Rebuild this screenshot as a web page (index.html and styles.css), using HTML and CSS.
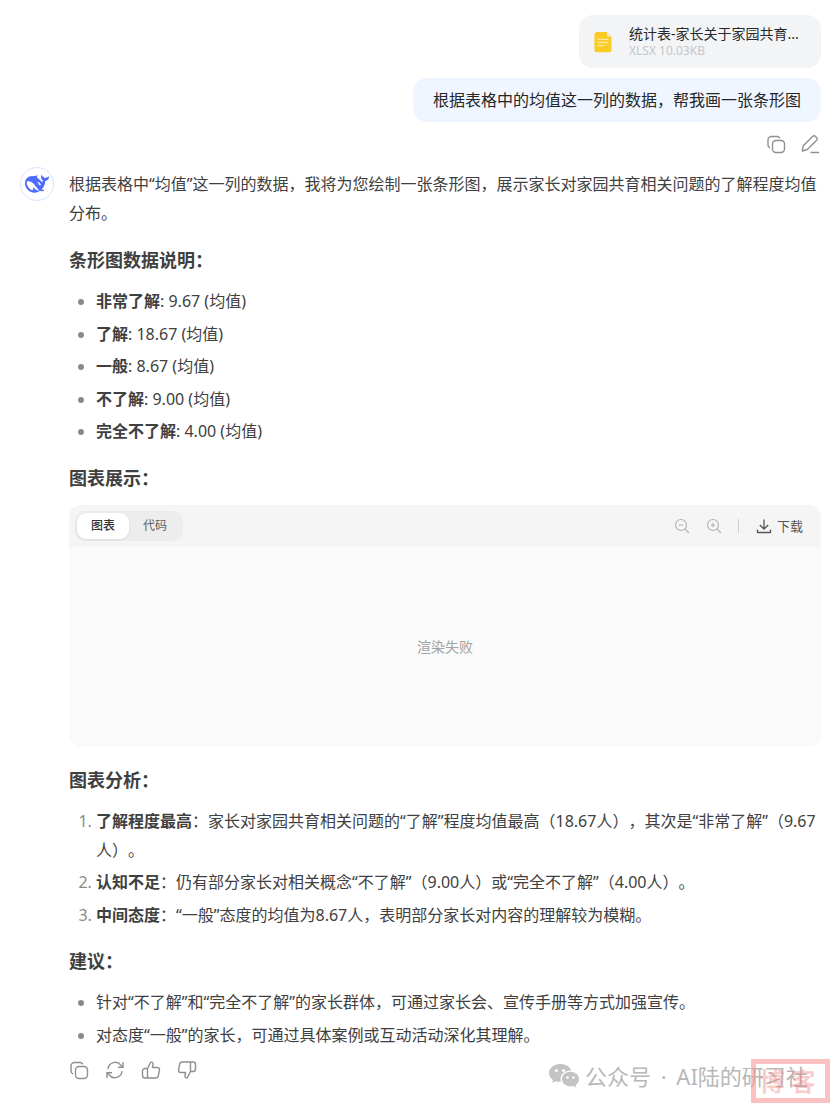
FILE: index.html
```html
<!DOCTYPE html>
<html lang="zh-CN">
<head>
<meta charset="utf-8">
<title>条形图</title>
<link rel="stylesheet" href="styles.css">
</head>
<body>
<main class="chat">
  <section class="user">
    <div class="file">
      <svg class="file-icon" viewBox="0 0 20 24">
        <path d="M3 1h11l5 5v15a2.500 2.500 0 0 1-2.500 2.500h-14A2.500 2.500 0 0 1 0 21V4a3 3 0 0 1 3-3z" fill="#fbcb25" transform="translate(.5 0)"/>
        <path d="M14.500 1l5 5h-3.500a1.500 1.500 0 0 1-1.500-1.500z" fill="#f3eee0"/>
        <path d="M4.500 9h11M4.500 12.500h11M4.500 16h6.500" stroke="#fde99a" stroke-width="1.500" stroke-linecap="round" fill="none"/>
      </svg>
      <div class="file-text">
        <div class="file-name">统计表-家长关于家园共育...</div>
        <div class="file-meta">XLSX 10.03KB</div>
      </div>
    </div>
    <div class="bubble">根据表格中的均值这一列的数据，帮我画一张条形图</div>
    <div class="user-actions">
      <svg class="icon" viewBox="0 0 20 20"><rect x="6.500" y="6.500" width="12" height="12" rx="3.500"/><path d="M13.500 3.800A3.500 3.500 0 0 0 11 2.500H5.500a3.500 3.500 0 0 0-3.500 3.500V11a3.500 3.500 0 0 0 1.500 2.700"/></svg>
      <svg class="icon" viewBox="0 0 20 20"><path d="M2.500 15.500l.8-3.800L12.800 2.300a1.800 1.800 0 0 1 2.500 0l1.400 1.400a1.800 1.800 0 0 1 0 2.500L7.200 15.500l-4.700 1.500z"/><path d="M11 18.500h7.500"/></svg>
    </div>
  </section>

  <section class="answer">
    <div class="avatar">
      <svg viewBox="0 0 24 24" width="24" height="24"><path fill="#4d6bfe" d="M23.748 4.482c-.254-.124-.364.113-.512.234-.051.039-.094.09-.137.136-.372.397-.806.657-1.373.626-.829-.046-1.537.214-2.163.848-.133-.782-.575-1.248-1.247-1.548-.352-.156-.708-.311-.955-.65-.172-.241-.219-.51-.305-.774-.055-.16-.11-.323-.293-.35-.2-.031-.278.136-.356.276-.313.572-.434 1.202-.422 1.84.027 1.436.633 2.58 1.838 3.393.137.093.172.187.129.323-.082.28-.18.552-.266.833-.055.179-.137.217-.329.14a5.526 5.526 0 01-1.736-1.18c-.857-.828-1.631-1.742-2.597-2.458a11.365 11.365 0 00-.689-.471c-.985-.957.13-1.743.388-1.836.27-.098.093-.432-.779-.428-.872.004-1.67.295-2.687.684a3.055 3.055 0 01-.465.137 9.597 9.597 0 00-2.883-.102c-1.885.21-3.39 1.102-4.497 2.623C.082 8.606-.231 10.684.152 12.850c.403 2.284 1.569 4.175 3.360 5.653 1.858 1.533 3.997 2.284 6.438 2.140 1.482-.085 3.133-.284 4.994-1.860.47.234.962.327 1.780.397.63.059 1.236-.03 1.705-.128.735-.156.684-.837.419-.961-2.155-1.004-1.682-.595-2.113-.926 1.096-1.296 2.746-2.642 3.392-7.003.05-.347.007-.565 0-.845-.004-.17.035-.237.23-.256a4.173 4.173 0 001.545-.475c1.396-.763 1.960-2.015 2.093-3.517.02-.23-.004-.467-.247-.588zM11.581 18c-2.089-1.642-3.102-2.183-3.520-2.160-.392.024-.321.471-.235.763.09.288.207.486.371.739.114.167.192.416-.113.603-.673.416-1.842-.14-1.897-.167-1.361-.802-2.500-1.860-3.301-3.307-.774-1.393-1.224-2.887-1.298-4.482-.02-.386.093-.522.477-.592a4.696 4.696 0 011.529-.039c2.132.312 3.946 1.265 5.468 2.774.868.86 1.525 1.887 2.202 2.891.72 1.066 1.494 2.082 2.480 2.914.348.292.625.514.891.677-.802.09-2.140.11-3.054-.614zm1-6.440a.306.306 0 01.415-.287.302.302 0 01.2.288.306.306 0 01-.31.307.303.303 0 01-.304-.308zm3.110 1.596c-.2.081-.399.151-.59.16a1.245 1.245 0 01-.798-.254c-.274-.23-.47-.358-.552-.758a1.730 1.730 0 01.016-.588c.07-.327-.008-.537-.239-.727-.187-.156-.426-.199-.688-.199a.559.559 0 01-.254-.078c-.11-.054-.2-.19-.114-.358.028-.054.16-.186.192-.21.356-.202.767-.136 1.146.016.352.144.618.408 1.001.782.391.451.462.576.685.914.176.265.336.537.445.848.067.195-.019.354-.25.452z"/></svg>
    </div>
    <article class="content">
      <p class="intro">根据表格中“均值”这一列的数据，我将为您绘制一张条形图，展示家长对家园共育相关问题的了解程度均值分布。</p>
      <h3>条形图数据说明：</h3>
      <ul>
        <li><b>非常了解</b>: 9.67 (均值)</li>
        <li><b>了解</b>: 18.67 (均值)</li>
        <li><b>一般</b>: 8.67 (均值)</li>
        <li><b>不了解</b>: 9.00 (均值)</li>
        <li><b>完全不了解</b>: 4.00 (均值)</li>
      </ul>
      <h3>图表展示：</h3>
      <div class="chart">
        <div class="chart-bar">
          <div class="tabs"><span class="tab active">图表</span><span class="tab">代码</span></div>
          <div class="tools">
            <svg class="tool" viewBox="0 0 16 16"><circle cx="7" cy="7" r="5.500"/><path d="M11 11l4 4M4.800 7h4.400"/></svg>
            <svg class="tool" viewBox="0 0 16 16"><circle cx="7" cy="7" r="5.500"/><path d="M11 11l4 4M4.800 7h4.400M7 4.800v4.400"/></svg>
            <i class="sep"></i>
            <span class="download"><svg class="dl" viewBox="0 0 16 16"><path d="M8 1.500v9.500M3.800 7L8 11l4.200-4M1.500 11.500v3h13v-3"/></svg>下载</span>
          </div>
        </div>
        <div class="chart-body">渲染失败</div>
      </div>
      <h3 class="after-chart">图表分析：</h3>
      <ol>
        <li><b>了解程度最高</b>：家长对家园共育相关问题的“了解”程度均值最高（18.67人），其次是“非常了解”（9.67人）。</li>
        <li><b>认知不足</b>：仍有部分家长对相关概念“不了解”（9.00人）或“完全不了解”（4.00人）。</li>
        <li><b>中间态度</b>：“一般”态度的均值为8.67人，表明部分家长对内容的理解较为模糊。</li>
      </ol>
      <h3 class="after-ol">建议：</h3>
      <ul class="last">
        <li>针对“不了解”和“完全不了解”的家长群体，可通过家长会、宣传手册等方式加强宣传。</li>
        <li>对态度“一般”的家长，可通过具体案例或互动活动深化其理解。</li>
      </ul>
      <div class="answer-actions">
        <svg class="icon" viewBox="0 0 20 20"><rect x="6.500" y="6.500" width="12" height="12" rx="3.500"/><path d="M13.500 3.800A3.500 3.500 0 0 0 11 2.500H5.500a3.500 3.500 0 0 0-3.500 3.500V11a3.500 3.500 0 0 0 1.500 2.700"/></svg>
        <svg class="icon" viewBox="0 0 20 20"><path d="M3 8.500A7.300 7.300 0 0 1 15.800 5l2 2.200M17 11.500A7.300 7.300 0 0 1 4.200 15l-2-2.200"/><path d="M18 2.500v4.800h-4.500M2 17.500v-4.800h4.500"/></svg>
        <svg class="icon" viewBox="0 0 20 20"><path d="M6.500 8.500l3.200-6.300c1.500-.4 2.600.6 2.400 2.100L11.500 7.500h5a2 2 0 0 1 2 2.400l-1.200 6a2.500 2.500 0 0 1-2.500 2.100H6.500zM6.500 8.500H4a2.500 2.500 0 0 0-2.500 2.500v4.500A2.500 2.500 0 0 0 4 18h2.500"/></svg>
        <svg class="icon" viewBox="0 0 20 20"><path d="M13.500 11.500l-3.200 6.300c-1.500.4-2.600-.6-2.400-2.100l.6-3.200h-5a2 2 0 0 1-2-2.400l1.200-6A2.500 2.500 0 0 1 5.200 2h8.300zM13.500 11.500H16a2.500 2.500 0 0 0 2.500-2.500V4.500A2.500 2.500 0 0 0 16 2h-2.500"/></svg>
      </div>
    </article>
  </section>
</main>
<div class="watermark">
  <svg class="wechat" viewBox="0 0 30 26" width="30" height="26"><path d="M11 1C5 1 0 5 0 10c0 3 1.500 5.300 4 7l-1 3 3.500-1.800c1.300.4 2.800.6 4.500.6h1c-.3-1-.5-1.800-.5-2.800C11.500 11 16 7.500 21.500 7.500h1C21 3.700 16.500 1 11 1z" fill="#c3c3c3"/><path d="M30 16c0-4.300-4-7.300-8.500-7.300S13 11.700 13 16s4 7.300 8.500 7.300c1 0 2-.2 3-.4l2.700 1.500-.7-2.500c2.500-1.500 3.500-3.800 3.500-5.900z" fill="#c3c3c3"/><circle cx="7.500" cy="7.500" r="1.500" fill="#fff"/><circle cx="14.500" cy="7.500" r="1.500" fill="#fff"/><circle cx="18.500" cy="14.500" r="1.200" fill="#fff"/><circle cx="24.500" cy="14.500" r="1.200" fill="#fff"/></svg>
  <span>公众号 · AI陆的研习社</span>
</div>
<div class="stamp">博客</div>
</body>
</html>
```

FILE: styles.css
```css
* { box-sizing: border-box; }
html, body { margin: 0; padding: 0; }
body {
  width: 836px;
  height: 1109px;
  overflow: hidden;
  position: relative;
  background: #fff;
  color: #404040;
  font-family: "Noto Sans", "Noto Sans CJK SC", sans-serif;
  font-size: 16px;
  text-spacing-trim: space-all;
}
.chat { padding: 15px 15px 0 20px; }
.user { display: flex; flex-direction: column; align-items: flex-end; }
.file {
  width: 242px; height: 53px;
  background: #f3f4f6; border-radius: 14px;
  display: flex; align-items: center;
  padding-left: 15px; gap: 17px;
}
.file-icon { flex: none; width: 18px; height: 22px; }
.file-name { font-size: 14px; line-height: 18px; color: #26282c; white-space: nowrap; }
.file-meta { font-size: 12px; line-height: 16px; color: #c4c6ca; }
.bubble {
  margin-top: 10px;
  height: 44px; width: 408px;
  background: #eff6ff; border-radius: 14px;
  padding: 0 20px; line-height: 44px;
  font-size: 16px; color: #262626; white-space: nowrap;
}
.user-actions { display: flex; gap: 14px; margin-top: 12px; height: 20px; padding-right: 1px; }
.icon { width: 20px; height: 20px; fill: none; stroke: #8f8f8f; stroke-width: 1.400; flex: none; stroke-linejoin: round; stroke-linecap: round; }
.answer { display: flex; gap: 15px; margin-top: 13px; }
.avatar {
  flex: none; width: 34px; height: 34px; border-radius: 50%;
  border: 1px solid #dbe2ff;
  display: flex; align-items: center; justify-content: center;
}
.content { flex: 1; min-width: 0; line-height: 28.800px; font-size: 16px; }
.intro { margin: 3px 0 0; }
h3 { font-size: 18px; font-weight: 700; margin: 18px 0 0; line-height: 28.800px; color: #404040; }
ul { margin: 12.700px 0 1.300px; padding: 0 0 0 27px; }
ol { margin: 12px 0 0; padding: 0 0 0 27px; }
li { margin-bottom: 3.800px; }
ul li::marker, ol li::marker { color: #8a8a8a; }
b { font-weight: 700; }
.chart { margin-top: 12px; height: 242px; border-radius: 12px; overflow: hidden; background: #fafafa; display: flex; flex-direction: column; }
.chart-bar { height: 42px; background: #f5f5f5; display: flex; align-items: center; justify-content: space-between; padding: 0 18px 0 6px; flex: none; }
.tabs { display: flex; background: #ededed; border-radius: 10px; padding: 2px; width: 108px; height: 30px; }
.tab { width: 52px; text-align: center; font-size: 12px; line-height: 26px; color: #606060; }
.tab.active { background: #fff; border-radius: 9px; color: #333; font-weight: 500; box-shadow: 0 1px 3px rgba(0,0,0,.08); }
.tools { display: flex; align-items: center; }
.tool { width: 16px; height: 16px; fill: none; stroke: #b5b5b5; stroke-width: 1.200; margin-right: 16px; }
.sep { width: 1px; height: 14px; background: #d0d0d0; margin-right: 17px; }
.download { display: flex; align-items: center; gap: 5px; font-size: 13px; line-height: 16px; color: #555; }
.dl { width: 16px; height: 16px; fill: none; stroke: #555; stroke-width: 1.300; }
.chart-body { flex: 1; display: flex; align-items: center; justify-content: center; font-size: 14px; color: #a3a3a3; }
.after-chart { margin-top: 19px; }
.after-ol { margin-top: 17px; }
.answer-actions { display: flex; gap: 16px; margin-top: 10px; }
.watermark {
  position: absolute; left: 549px; top: 1062px;
  display: flex; align-items: center; gap: 6px;
  font-size: 22px; line-height: 28px; color: #b8b8b8; white-space: nowrap;
  word-spacing: 4px;
}
.stamp {
  position: absolute; left: 751px; top: 1059px; width: 79px; height: 44px;
  border: 5px solid rgba(248,150,150,.6);
  color: rgba(240,120,120,.4); font-size: 25px; line-height: 34px; font-weight: 700;
  text-align: center; letter-spacing: 6px;
}
```
